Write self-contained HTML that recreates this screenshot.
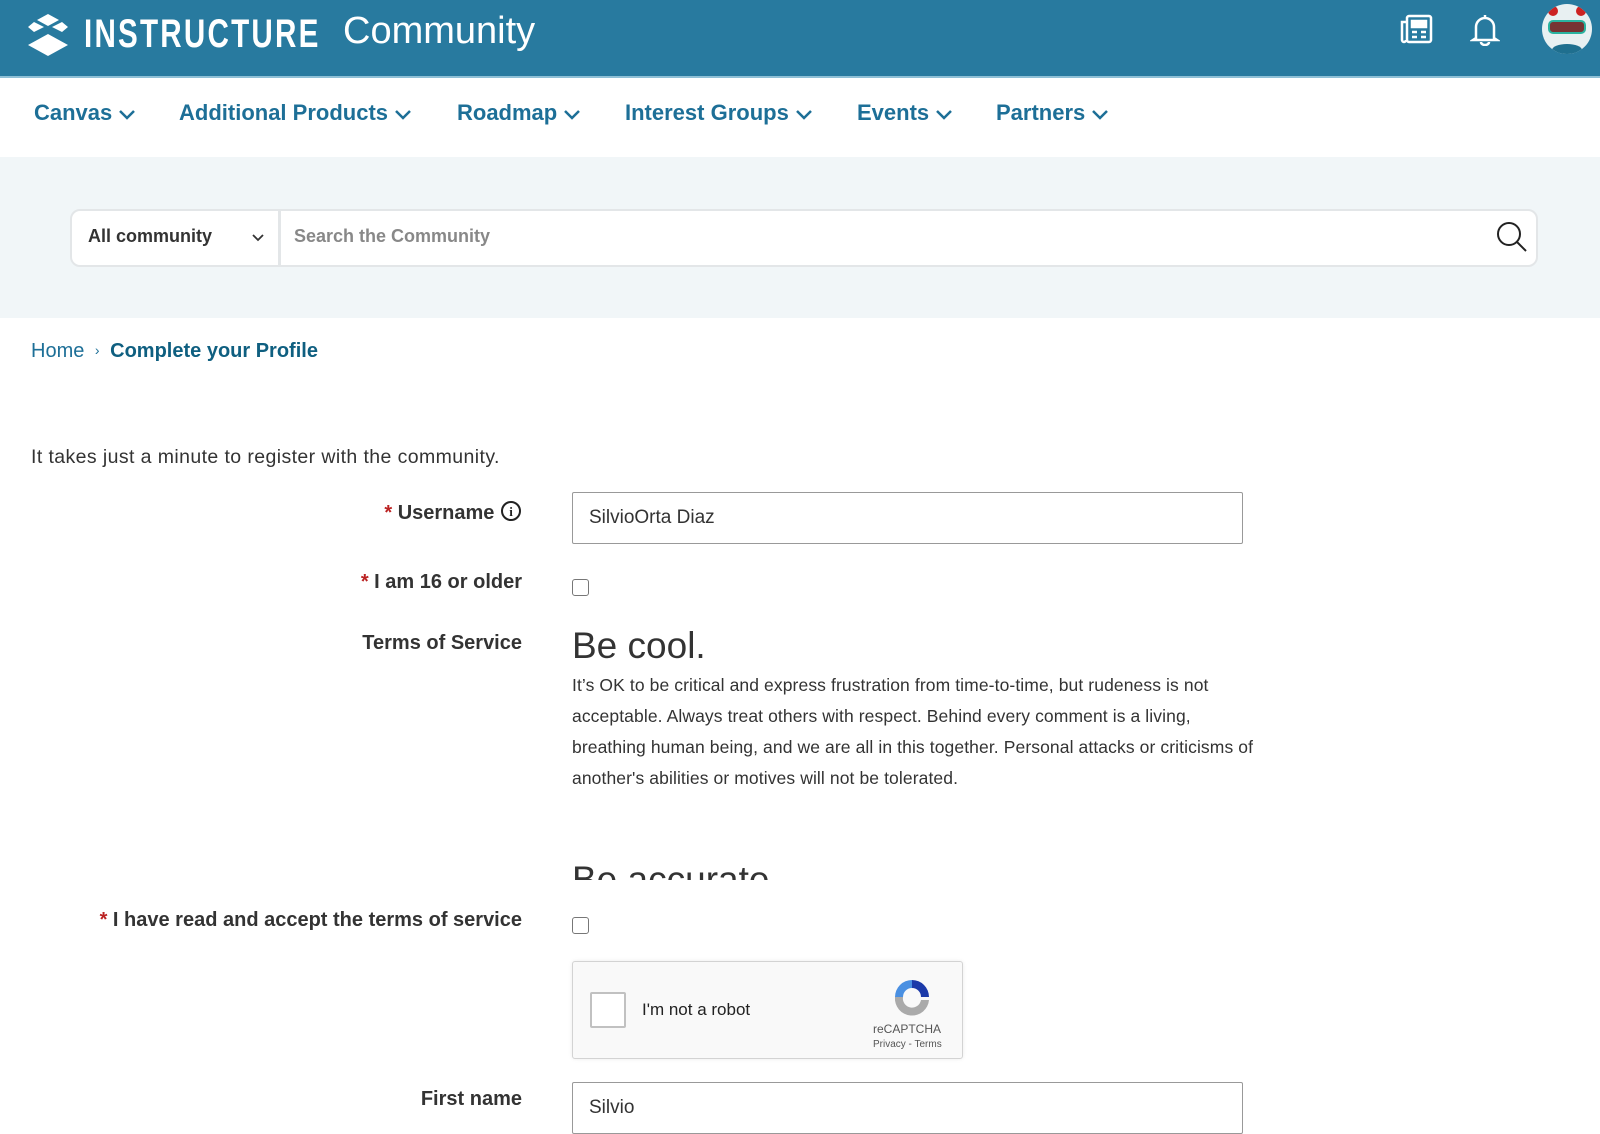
<!DOCTYPE html>
<html><head><meta charset="utf-8">
<style>
*{box-sizing:border-box;margin:0;padding:0}
body{width:1600px;height:1134px;overflow:hidden;background:#fff;font-family:"Liberation Sans",Arial,sans-serif;color:#333;position:relative}
.hdr{position:absolute;left:0;top:0;width:1600px;height:78px;background:#287a9f;border-bottom:2px solid #8fc0d6}
.logo{position:absolute;left:84px;top:12px;color:#fff;font-size:40px;font-weight:bold;letter-spacing:3px;transform:scaleX(.74);transform-origin:left}
.comm{position:absolute;left:343px;top:10px;color:#fff;font-size:38px}
.nav{position:absolute;top:100px;font-size:22px;font-weight:bold;color:#1d6f97}
.nav svg{vertical-align:middle;margin-left:6px}
.band{position:absolute;left:0;top:157px;width:1600px;height:161px;background:#f1f6f8}
.search{position:absolute;left:70px;top:209px;width:1468px;height:58px;background:#fff;border:2px solid #e3e6e8;border-radius:10px}
.lbl{position:absolute;font-size:20px;font-weight:bold;color:#333;text-align:right;right:1078px}
.star{color:#b22;}
.inp{position:absolute;left:572px;width:671px;height:52px;border:1px solid #999;border-radius:2px;font-size:19px;padding:14px 16px;color:#333}
.cb{position:absolute;left:572px;width:17px;height:17px;border:1px solid #777;border-radius:3px}
</style></head><body>
<div class="hdr">
<svg style="position:absolute;left:28px;top:14px" width="40" height="42" viewBox="0 0 40 42"><path d="M20 0 L31 6 L20 12 L9 6Z M6 8 L16 13 L6 18 L0 13Z M34 8 L40 13 L34 18 L24 13Z" fill="#fff"/><path d="M20 20 L40 31 L20 42 L0 31Z" fill="#fff"/></svg>
<div class="logo">INSTRUCTURE</div>
<div class="comm">Community</div>
<svg style="position:absolute;left:1399px;top:14px" width="34" height="30" viewBox="0 0 34 30" fill="none" stroke="#fff" stroke-width="2.5"><rect x="8" y="2" width="24" height="26" rx="2"/><path d="M8 8 H3 V26 a2 2 0 0 0 4 0"/><rect x="13" y="7" width="14" height="6" fill="#fff"/><path d="M13 18h5M22 18h5M13 23h5M22 23h5"/></svg>
<svg style="position:absolute;left:1470px;top:12px" width="30" height="34" viewBox="0 0 30 34" fill="none" stroke="#fff" stroke-width="2.5"><path d="M15 3 V6 M6 26 V15 a9 9 0 0 1 18 0 V26 L27 28 H3 Z M11 30 a4 3 0 0 0 8 0"/></svg>
<div style="position:absolute;left:1542px;top:4px;width:50px;height:50px;border-radius:50%;background:#e8f0f2;overflow:hidden">
<div style="position:absolute;left:6px;top:2px;width:10px;height:10px;border-radius:50%;background:#c22"></div><div style="position:absolute;left:34px;top:2px;width:10px;height:10px;border-radius:50%;background:#c22"></div>
<div style="position:absolute;left:6px;top:16px;width:38px;height:14px;border:2px solid #2ab3a0;border-radius:5px;background:#733"></div>
<div style="position:absolute;left:10px;top:40px;width:30px;height:12px;background:#1f6f8f;border-radius:50%"></div></div>
</div>
<div class="nav" style="left:34px">Canvas<svg width="18" height="12"><path d="M2 3 L9 10 L16 3" stroke="#1d6f97" stroke-width="2.5" fill="none"/></svg></div>
<div class="nav" style="left:179px">Additional Products<svg width="18" height="12"><path d="M2 3 L9 10 L16 3" stroke="#1d6f97" stroke-width="2.5" fill="none"/></svg></div>
<div class="nav" style="left:457px">Roadmap<svg width="18" height="12"><path d="M2 3 L9 10 L16 3" stroke="#1d6f97" stroke-width="2.5" fill="none"/></svg></div>
<div class="nav" style="left:625px">Interest Groups<svg width="18" height="12"><path d="M2 3 L9 10 L16 3" stroke="#1d6f97" stroke-width="2.5" fill="none"/></svg></div>
<div class="nav" style="left:857px">Events<svg width="18" height="12"><path d="M2 3 L9 10 L16 3" stroke="#1d6f97" stroke-width="2.5" fill="none"/></svg></div>
<div class="nav" style="left:996px">Partners<svg width="18" height="12"><path d="M2 3 L9 10 L16 3" stroke="#1d6f97" stroke-width="2.5" fill="none"/></svg></div>
<div class="band"></div>
<div class="search">
<div style="position:absolute;left:16px;top:15px;font-size:18px;font-weight:bold;color:#333">All community</div>
<svg style="position:absolute;left:180px;top:23px" width="12" height="8"><path d="M1 1 L6 6 L11 1" stroke="#333" stroke-width="1.8" fill="none"/></svg>
<div style="position:absolute;left:206px;top:-2px;width:3px;height:58px;background:#e3e6e8"></div>
<div style="position:absolute;left:222px;top:15px;font-size:18px;font-weight:bold;color:#888">Search the Community</div>
<svg style="position:absolute;left:1424px;top:10px" width="32" height="32" viewBox="0 0 32 32" fill="none" stroke="#222" stroke-width="2"><circle cx="13" cy="13" r="11"/><path d="M21 21 L30 30"/></svg>
</div>
<div style="position:absolute;left:31px;top:340px;font-size:20px;color:#1d6f97">Home <span style="font-size:14px;margin:0 5px;position:relative;top:-2px">›</span> <b style="color:#0f5f80">Complete your Profile</b></div>
<div style="position:absolute;left:31px;top:446px;font-size:19.5px;color:#333;letter-spacing:.4px">It takes just a minute to register with the community.</div>
<div class="lbl" style="top:500px"><span class="star">*</span> Username <svg width="22" height="22" viewBox="0 0 22 22" style="vertical-align:-3px"><circle cx="11" cy="11" r="9" stroke="#222" stroke-width="2" fill="none"/><text x="11" y="16" font-size="13" font-weight="bold" text-anchor="middle" fill="#222" font-family="Liberation Serif">i</text></svg></div>
<div class="inp" style="top:492px">SilvioOrta Diaz</div>
<div class="lbl" style="top:571px"><span class="star">*</span> I am 16 or older</div>
<div class="cb" style="top:579px"></div>
<div class="lbl" style="top:632px">Terms of Service</div>
<div style="position:absolute;left:572px;top:622px;width:690px;height:258px;overflow:hidden;color:#333">
<div style="font-size:37px;line-height:48px">Be cool.</div>
<div style="font-size:17.5px;line-height:31px;letter-spacing:.1px;width:685px">It’s OK to be critical and express frustration from time-to-time, but rudeness is not acceptable. Always treat others with respect. Behind every comment is a living, breathing human being, and we are all in this together. Personal attacks or criticisms of another's abilities or motives will not be tolerated.</div>
<div style="font-size:37px;line-height:48px;margin-top:62px">Be accurate.</div>
</div>
<div class="lbl" style="top:909px"><span class="star">*</span> I have read and accept the terms of service</div>
<div class="cb" style="top:917px"></div>
<div style="position:absolute;left:572px;top:961px;width:391px;height:98px;background:#f9f9f9;border:1px solid #d3d3d3;border-radius:3px;box-shadow:0 0 4px rgba(0,0,0,.08)">
<div style="position:absolute;left:17px;top:30px;width:36px;height:36px;border:2px solid #c1c1c1;border-radius:2px;background:#fff"></div>
<div style="position:absolute;left:69px;top:38px;font-size:17px;color:#222">I'm not a robot</div>
<svg style="position:absolute;left:318px;top:14px" width="42" height="42" viewBox="0 0 42 42"><path d="M21 4 A17 17 0 0 1 38 21 H30 A9 9 0 0 0 21 12Z" fill="#1c3aa9"/><path d="M4 21 A17 17 0 0 1 21 4 V12 A9 9 0 0 0 12 21Z" fill="#4a90e2"/><path d="M4 21 H12 A9 9 0 0 0 30 24 L38 24 A17 17 0 0 1 4 21Z" fill="#aaa"/></svg>
<div style="position:absolute;left:300px;top:60px;font-size:12px;color:#555">reCAPTCHA</div>
<div style="position:absolute;left:300px;top:77px;font-size:10px;color:#555">Privacy - Terms</div>
</div>
<div class="lbl" style="top:1088px">First name</div>
<div class="inp" style="top:1082px">Silvio</div>
</body></html>
